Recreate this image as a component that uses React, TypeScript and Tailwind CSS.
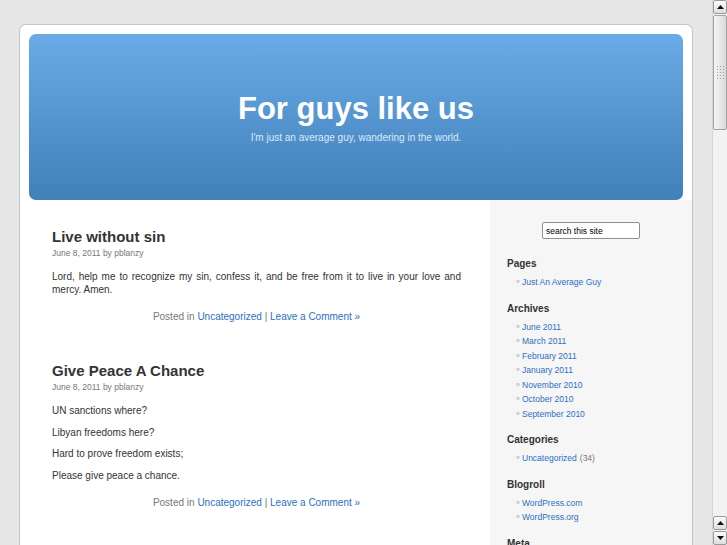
import { ReactNode } from "react";

const archives = [
  "June 2011",
  "March 2011",
  "February 2011",
  "January 2011",
  "November 2010",
  "October 2010",
  "September 2010",
];

function PostMeta() {
  return (
    <p className="mt-[14px] text-center text-[10px] leading-[13px] text-[#777]">
      Posted in <a className="text-[#2c6fc5]">Uncategorized</a> |{" "}
      <a className="text-[#2c6fc5]">Leave a Comment »</a>
    </p>
  );
}

function Post({ title, children, first }: { title: string; children: ReactNode; first?: boolean }) {
  return (
    <div className={first ? "" : "mt-[39px]"}>
      <h2 className="text-[15px] font-bold leading-[18px] text-[#333]">{title}</h2>
      <div className="mt-[2px] text-[8.5px] leading-[11px] text-[#777]">June 8, 2011 by pblanzy</div>
      <div className="mt-[11px] text-[10px] leading-[13px] text-[#333]">{children}</div>
      <PostMeta />
    </div>
  );
}

function Widget({ title, children, first }: { title: string; children?: ReactNode; first?: boolean }) {
  return (
    <div className={first ? "mt-[19px]" : "mt-[13px]"}>
      <h3 className="text-[10px] font-bold leading-[12px] text-[#333]">{title}</h3>
      {children && <ul className="mt-[5px] pl-[9px]">{children}</ul>}
    </div>
  );
}

function Item({ label, extra }: { label: string; extra?: string }) {
  return (
    <li className="flex h-[14.5px] items-center text-[8.5px] leading-[14.5px]">
      <span className="w-[6px] text-[7px] text-[#aaa]">»</span>
      <a className="text-[#2c6fc5]">{label}</a>
      {extra && <span className="ml-[3px] text-[#777]">{extra}</span>}
    </li>
  );
}

function Arrow({ down }: { down?: boolean }) {
  return (
    <div className="flex h-[14px] w-[14px] items-center justify-center rounded-[2px] border border-[#9a9a9a] bg-gradient-to-b from-[#fbfbfb] to-[#dedede]">
      <svg width="7" height="4" viewBox="0 0 7 4">
        <path d={down ? "M0 0h7L3.5 4z" : "M0 4h7L3.5 0z"} fill="#111" />
      </svg>
    </div>
  );
}

function Scrollbar() {
  return (
    <div className="flex h-full w-[15px] flex-col items-center border-l border-[#d6d6d6] bg-[#f2f2f2]">
      <Arrow />
      <div className="mt-[1px] flex h-[115px] w-[14px] items-center justify-center rounded-[2px] border border-[#a3a3a3] bg-gradient-to-r from-[#f6f6f6] to-[#d9d9d9]">
        <div className="grid grid-cols-3 gap-[2px]">
          {Array.from({ length: 15 }).map((_, i) => (
            <span key={i} className="h-[1px] w-[1px] bg-[#9d9d9d]" />
          ))}
        </div>
      </div>
      <div className="flex-1" />
      <Arrow />
      <div className="mt-[1px]">
        <Arrow down />
      </div>
    </div>
  );
}

export default function App() {
  return (
    <div className="flex h-[545px] w-[727px] overflow-hidden bg-[#e7e7e7] font-['Liberation_Sans',Arial,sans-serif]">
      <div className="flex-1 px-[19px] pt-[24px]">
        <div className="flex h-full flex-col rounded-t-[7px] border border-b-0 border-[#c4c4c4] bg-white">
          {/* Blue header */}
          <div className="px-[9px] pt-[9px]">
            <div className="flex h-[166px] flex-col items-center rounded-[7px] bg-gradient-to-b from-[#6aabe8] to-[#4180b8] pt-[57px]">
              <h1 className="text-[31px] font-bold leading-[36px] text-white">For guys like us</h1>
              <p className="mt-[5px] text-[10px] leading-[12px] text-[#dde9f6]">
                I&apos;m just an average guy, wandering in the world.
              </p>
            </div>
          </div>

          <div className="flex flex-1">
            {/* Posts */}
            <div className="w-[470px] pl-[32px] pr-[29px] pt-[28px]">
              <Post title="Live without sin" first>
                <p className="text-justify">
                  Lord, help me to recognize my sin, confess it, and be free from it to live in your love and mercy. Amen.
                </p>
              </Post>
              <Post title="Give Peace A Chance">
                <p>UN sanctions where?</p>
                <p className="mt-[8.7px]">Libyan freedoms here?</p>
                <p className="mt-[8.7px]">Hard to prove freedom exists;</p>
                <p className="mt-[8.7px]">Please give peace a chance.</p>
              </Post>
            </div>

            {/* Sidebar */}
            <div className="flex-1 bg-[#f6f6f6] pl-[17px] pt-[22px]">
              <div className="flex justify-center pr-[17px]">
                <input
                  defaultValue="search this site"
                  className="h-[17px] w-[98px] rounded-[2px] border border-[#8f8f8f] bg-white px-[3px] text-[8.5px] text-black outline-none"
                />
              </div>
              <Widget title="Pages" first>
                <Item label="Just An Average Guy" />
              </Widget>
              <Widget title="Archives">
                {archives.map((a) => (
                  <Item key={a} label={a} />
                ))}
              </Widget>
              <Widget title="Categories">
                <Item label="Uncategorized" extra="(34)" />
              </Widget>
              <Widget title="Blogroll">
                <Item label="WordPress.com" />
                <Item label="WordPress.org" />
              </Widget>
              <Widget title="Meta" />
            </div>
          </div>
        </div>
      </div>
      <Scrollbar />
    </div>
  );
}
